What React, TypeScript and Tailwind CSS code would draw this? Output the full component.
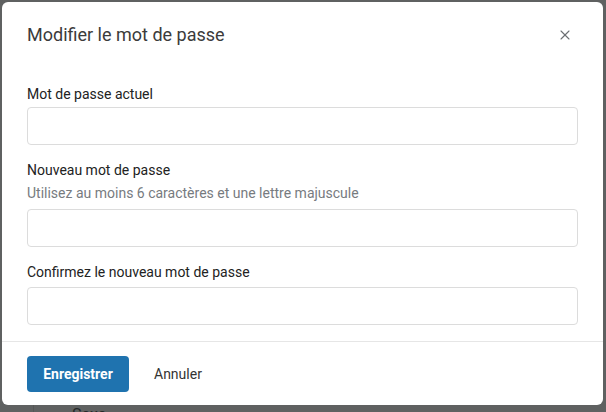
import { X } from "lucide-react";

const fields = [
  { id: "current", label: "Mot de passe actuel", hint: "" },
  {
    id: "new",
    label: "Nouveau mot de passe",
    hint: "Utilisez au moins 6 caractères et une lettre majuscule",
  },
  { id: "confirm", label: "Confirmez le nouveau mot de passe", hint: "" },
];

export default function App() {
  return (
    <div
      className="h-[412px] w-[606px] overflow-hidden bg-[#5f6161] p-[2px]"
      style={{ fontFamily: "Roboto, 'Liberation Sans', sans-serif" }}
    >
      <div className="w-[601px] rounded-[6px] bg-white">
        {/* Header */}
        <div className="flex items-center justify-between px-[25px] pt-[19px] pb-[18px]">
          <h2 className="text-[18px] leading-[28px] text-[#3b3b3b]">
            Modifier le mot de passe
          </h2>
          <button className="mr-[5px] text-[#6b6f72]">
            <X size={16} strokeWidth={1.6} />
          </button>
        </div>

        {/* Body */}
        <div className="flex flex-col gap-[15px] px-[25px] pt-[17px] pb-[16px]">
          {fields.map((f, i) => (
            <div key={f.id} className="flex flex-col">
              <label className="text-[14px] leading-[20px] text-[#222]">
                {f.label}
              </label>
              {f.hint && (
                <span className="mt-[3px] text-[14px] leading-[20px] text-[#777b7f]">
                  {f.hint}
                </span>
              )}
              <input
                type="password"
                className={`${f.hint ? "mt-[6px]" : i === 2 ? "mt-[5px]" : "mt-[3px]"} h-[38px] w-full rounded-[4px] border border-[#dcdcdc] bg-white px-3 outline-none`}
              />
            </div>
          ))}
        </div>

        {/* Footer */}
        <div className="flex items-center gap-[25px] border-t border-[#e6e6e6] px-[25px] pt-[14px] pb-[13px]">
          <button className="h-[36px] w-[102px] rounded-[4px] bg-[#1f73af] text-[14px] font-bold text-white">
            Enregistrer
          </button>
          <button className="text-[14px] text-[#333]">Annuler</button>
        </div>
      </div>
      <div className="ml-[31px] border-l border-[#555757] pl-[38px] text-[16px] leading-[20px] text-[#252828]">
        Sexe
      </div>
    </div>
  );
}
